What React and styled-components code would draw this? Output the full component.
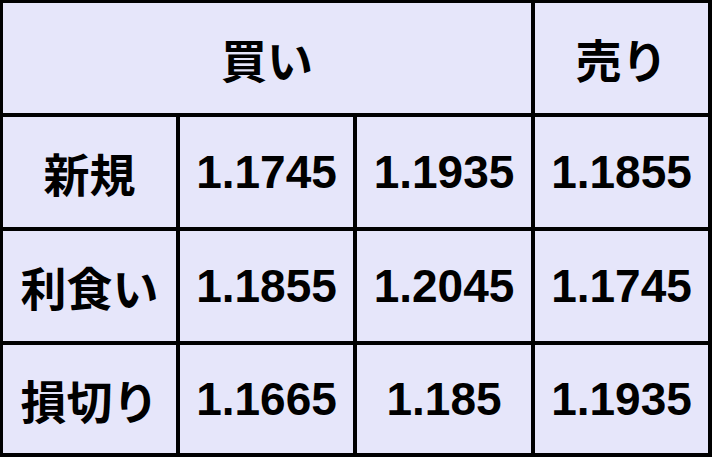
import React from "react";
import styled, { createGlobalStyle } from "styled-components";

const GlobalStyle = createGlobalStyle`
  html, body {
    margin: 0;
    padding: 0;
    background: #ffffff;
  }
`;

const rows = [
  { label: "新規", values: ["1.1745", "1.1935", "1.1855"] },
  { label: "利食い", values: ["1.1855", "1.2045", "1.1745"] },
  { label: "損切り", values: ["1.1665", "1.185", "1.1935"] },
];

const App = () => {
  return (
    <>
      <GlobalStyle />
      <Grid>
        <Cell $span={3}>買い</Cell>
        <Cell>売り</Cell>
        {rows.map((row) => (
          <React.Fragment key={row.label}>
            <Cell>{row.label}</Cell>
            {row.values.map((v, i) => (
              <Cell key={i}>{v}</Cell>
            ))}
          </React.Fragment>
        ))}
      </Grid>
    </>
  );
};

const Grid = styled.div`
  width: 712px;
  height: 457px;
  box-sizing: border-box;
  background: #000000;
  padding: 3px 4px 4px 3px;
  display: grid;
  grid-template-columns: 173px 173px 174px 173px;
  grid-template-rows: 110px 110px 110px 108px;
  gap: 4px;
`;

const Cell = styled.div`
  grid-column: span ${({ $span }) => $span || 1};
  background: #e6e6fa;
  display: flex;
  align-items: center;
  justify-content: center;
  font-family: "Liberation Sans", "Noto Sans CJK JP", sans-serif;
  font-weight: 700;
  font-size: 46px;
  color: #000000;
  white-space: nowrap;
`;

export default App;
